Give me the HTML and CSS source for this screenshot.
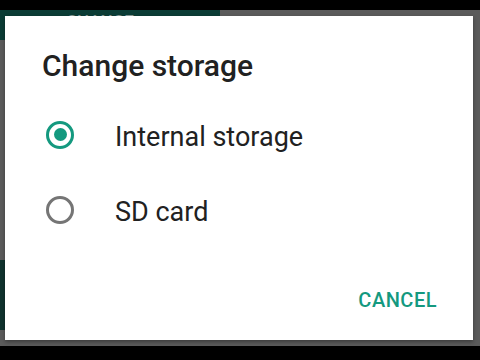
FILE: index.html
```html
<!DOCTYPE html>
<html lang="en">
<head>
  <meta charset="UTF-8">
  <title>Change storage</title>
  <link rel="stylesheet" href="styles.css">
</head>
<body>
  <div class="top-bar"></div>
  <div class="screen">
    <div class="toolbar">
      <span class="toolbar-btn">CHANGE</span>
    </div>
    <div class="side-btn"></div>

    <!-- dialog over the dimmed screen -->
    <div class="dialog">
      <h1 class="dialog-title">Change storage</h1>
      <ul class="options">
        <li class="option">
          <span class="radio checked"></span>
          <span class="label">Internal storage</span>
        </li>
        <li class="option">
          <span class="radio"></span>
          <span class="label">SD card</span>
        </li>
      </ul>
      <div class="actions">
        <button class="cancel">CANCEL</button>
      </div>
    </div>
  </div>
  <div class="bottom-bar"></div>
</body>
</html>
```

FILE: styles.css
```css
* {
  box-sizing: border-box;
}
body {
  margin: 0;
  width: 480px;
  height: 360px;
  overflow: hidden;
  background-color: #000;
  font-family: Roboto, "Noto Sans", sans-serif;
}
.top-bar {
  height: 10px;
}
.screen {
  position: relative;
  height: 336px;
  background-color: #5b5b5b;
}
.toolbar {
  width: 220px;
  height: 30px;
  background-color: #0b3c35;
}
.toolbar-btn {
  display: block;
  padding-left: 66px;
  padding-top: 1px;
  font-size: 17px;
  line-height: 20px;
  font-weight: 500;
  color: #8a9c98;
}
.side-btn {
  margin-top: 220px;
  width: 6px;
  height: 70px;
  background-color: #10332e;
}
.dialog {
  position: absolute;
  left: 5px;
  top: 6px;
  width: 468px;
  height: 324px;
  background-color: #fff;
  box-shadow: 0 2px 4px rgba(0, 0, 0, 0.35);
  padding: 35px 0 0 37px;
}
.dialog-title {
  margin: 0;
  font-size: 30px;
  font-weight: 500;
  line-height: 30px;
  color: #212121;
}
.options {
  list-style: none;
  margin: 0;
  padding: 16px 0 0 0;
}
.option {
  display: flex;
  align-items: center;
  height: 75px;
}
.radio {
  flex-shrink: 0;
  width: 28px;
  height: 28px;
  border-radius: 50%;
  border: 3px solid #757575;
  margin-left: 4px;
  margin-right: 41px;
  display: flex;
  align-items: center;
  justify-content: center;
}
.radio.checked {
  border-color: #14997f;
}
.radio.checked::after {
  content: "";
  width: 13px;
  height: 13px;
  border-radius: 50%;
  background-color: #14997f;
}
.label {
  padding-top: 5px;
  font-size: 27px;
  color: #212121;
}
.actions {
  display: flex;
  justify-content: flex-end;
  padding: 41px 36px 0 0;
}
.cancel {
  border: 0;
  background: none;
  padding: 0;
  font-family: Roboto, "Noto Sans", sans-serif;
  font-size: 20px;
  font-weight: 500;
  color: #14997f;
  letter-spacing: 0.5px;
}
.bottom-bar {
  height: 14px;
}
```
